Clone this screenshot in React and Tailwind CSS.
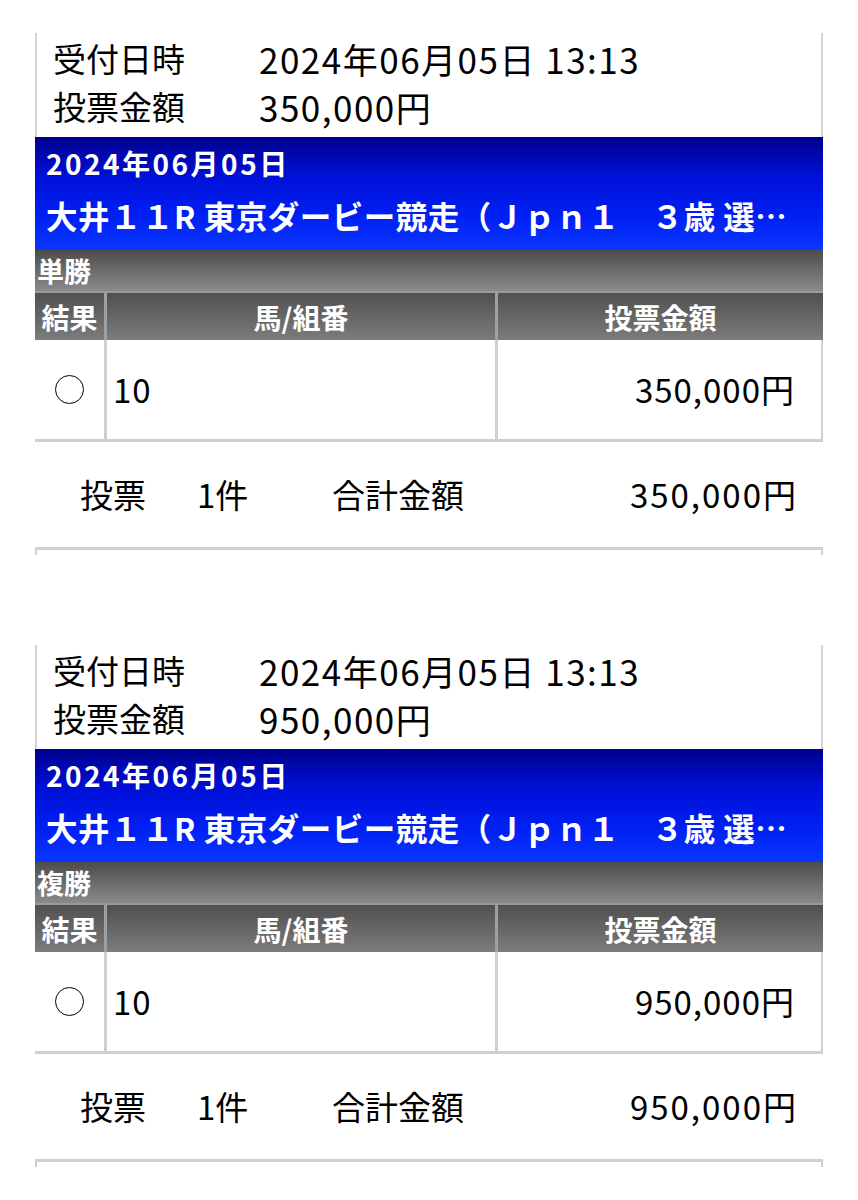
import React from "react";

const FONT = { fontFamily: '"Noto Sans CJK JP", "Noto Sans", sans-serif' };

const TICKETS = [
  {
    time: "2024年06月05日 13:13",
    amount: "350,000円",
    date: "2024年06月05日",
    race: "大井１１R 東京ダービー競走（Ｊｐｎ１　３歳 選…",
    type: "単勝",
    horse: "10",
    count: "1件",
  },
  {
    time: "2024年06月05日 13:13",
    amount: "950,000円",
    date: "2024年06月05日",
    race: "大井１１R 東京ダービー競走（Ｊｐｎ１　３歳 選…",
    type: "複勝",
    horse: "10",
    count: "1件",
  },
];

function Ticket({ t }) {
  return (
    <div className="w-[788px]">
      {/* receipt info */}
      <div className="border-x-2 border-[#d4d4d4] pt-[1px] pb-[7px] text-black leading-none">
        <div className="flex h-[48px] items-center">
          <span className="w-[222px] pl-[16px] text-[33px]">受付日時</span>
          <span className="text-[35px] tracking-[1.5px]">{t.time}</span>
        </div>
        <div className="flex h-[48px] items-center">
          <span className="w-[222px] pl-[16px] text-[33px]">投票金額</span>
          <span className="text-[35px] tracking-[1.5px]">{t.amount}</span>
        </div>
      </div>

      {/* race header */}
      <div className="h-[113px] bg-[linear-gradient(to_bottom,#00008c_0%,#0010d8_35%,#0020f4_70%,#0a36ff_100%)] pl-[11px] text-white font-bold leading-none">
        <div className="flex h-[52px] items-center text-[28px] tracking-[2.5px]">{t.date}</div>
        <div className="flex h-[54px] items-center whitespace-nowrap overflow-hidden text-[31.5px] tracking-[0.5px]">
          {t.race}
        </div>
      </div>

      {/* bet type */}
      <div className="flex h-[43px] items-center border-b-2 border-[#9a9a9a] bg-[linear-gradient(to_bottom,#4c4c4c,#8a8a8a)] pl-[2px] text-[27px] font-bold text-white leading-none">
        {t.type}
      </div>

      {/* table head */}
      <div className="flex h-[47px] bg-[linear-gradient(to_bottom,#505050,#7c7c7c)] text-[28px] font-bold text-white leading-none">
        <div className="flex w-[72px] items-center justify-center border-r-[3px] border-[#a0a0a0]">結果</div>
        <div className="flex w-[391px] items-center justify-center border-r-[3px] border-[#a0a0a0]">馬/組番</div>
        <div className="flex flex-1 items-center justify-center">投票金額</div>
      </div>

      {/* table row */}
      <div className="flex h-[102px] border-b-[3px] border-r-2 border-[#cfcfcf] text-[33px] tracking-[1px] text-black leading-none">
        <div className="flex w-[72px] items-center justify-center border-r-[3px] border-[#cfcfcf]">
          <div className="h-[29px] w-[29px] rounded-full border-[1.5px] border-black" />
        </div>
        <div className="flex w-[391px] items-center border-r-[3px] border-[#cfcfcf] pl-[6px]">
          {t.horse}
        </div>
        <div className="flex flex-1 items-center justify-end pr-[26px]">{t.amount}</div>
      </div>

      {/* summary */}
      <div className="flex h-[105px] items-center text-[33px] text-black leading-none">
        <span className="ml-[45px] w-[117px]">投票</span>
        <span className="w-[135px]">{t.count}</span>
        <span>合計金額</span>
        <span className="ml-auto mr-[25px] tracking-[2px]">{t.amount}</span>
      </div>

      <div className="h-[8px] border-x-2 border-t-[3px] border-[#d0d0d0]" />
    </div>
  );
}

export default function App() {
  return (
    <div className="min-h-[1200px] w-[858px] bg-white pt-[33px] pl-[35px]" style={FONT}>
      <div className="flex flex-col gap-[90px]">
        {TICKETS.map((t, i) => (
          <Ticket key={i} t={t} />
        ))}
      </div>
    </div>
  );
}
